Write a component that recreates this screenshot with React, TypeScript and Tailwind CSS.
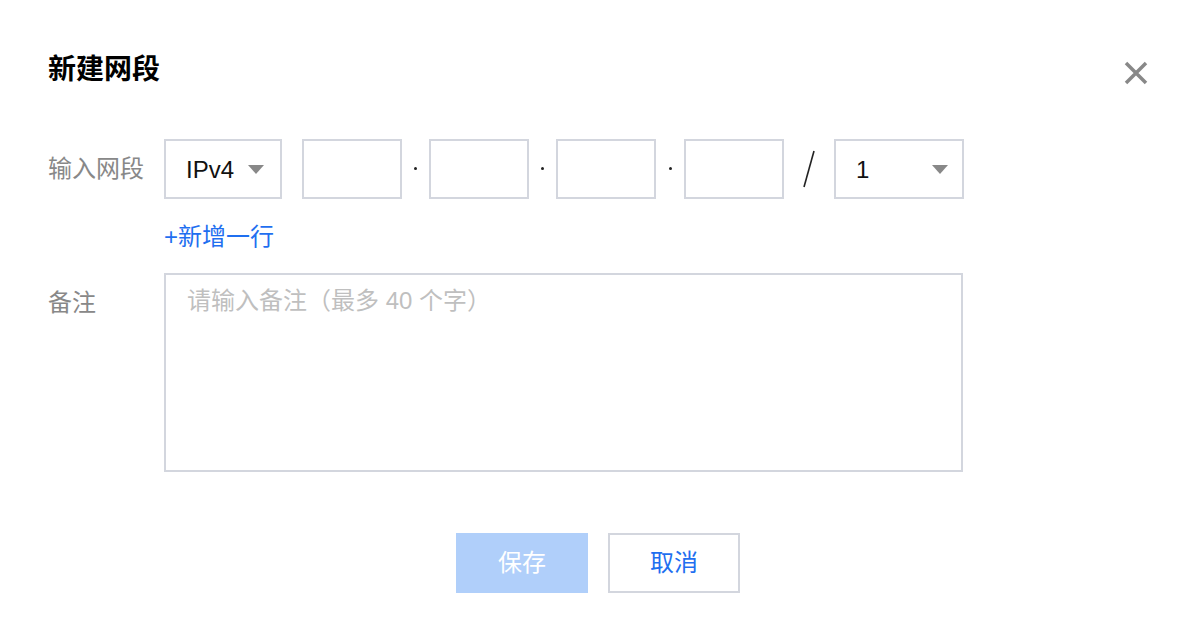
import React from "react";

const FONT = "font-['Liberation_Sans','Noto_Sans_CJK_SC',sans-serif]";

function Caret() {
  return (
    <svg width="16" height="9" viewBox="0 0 16 9" className="shrink-0">
      <path d="M0 0 L16 0 L8 9 Z" fill="#888888" />
    </svg>
  );
}

function Dot() {
  return (
    <div className="w-[27px] h-[60px] flex items-center justify-center">
      <div className="w-[3px] h-[3px] rounded-full bg-[#222] mt-[-2px]" />
    </div>
  );
}

function Box() {
  return <input className={`w-[100px] h-[60px] border-2 border-[#d3d6de] outline-none px-3 text-[24px] ${FONT}`} />;
}

export default function App() {
  return (
    <div className={`w-[1196px] h-[640px] bg-white ${FONT} text-[#000]`}>
      <div className="flex items-start justify-between pl-[48px] pr-[48px] pt-[50px]">
        <div className="text-[28px] leading-[40px] font-bold">新建网段</div>
        <svg width="24" height="24" viewBox="0 0 24 24" className="mt-[11px]">
          <path d="M2 2 L22 22 M22 2 L2 22" stroke="#888888" strokeWidth="3.5" />
        </svg>
      </div>

      <div className="flex items-center pl-[48px] mt-[49px]">
        <div className="w-[116px] text-[24px] leading-[36px] text-[#888]">输入网段</div>
        <div className="w-[118px] h-[60px] border-2 border-[#d3d6de] flex items-center justify-between pl-[20px] pr-[16px]">
          <span className="text-[24px] text-[#111] mt-[2px]">IPv4</span>
          <Caret />
        </div>
        <div className="w-[20px]" />
        <Box />
        <Dot />
        <Box />
        <Dot />
        <Box />
        <div className="w-[28px] h-[60px] flex items-center justify-center">
          <div className="w-[3px] h-[3px] rounded-full bg-[#222] mt-[-2px]" />
        </div>
        <Box />
        <div className="w-[50px] h-[60px] flex items-center justify-center">
          <svg width="14" height="40" viewBox="0 0 14 40">
            <path d="M12 2 L2 38" stroke="#222" strokeWidth="1.6" />
          </svg>
        </div>
        <div className="w-[130px] h-[60px] border-2 border-[#d3d6de] flex items-center justify-between pl-[20px] pr-[14px]">
          <span className="text-[24px] text-[#111] mt-[2px]">1</span>
          <Caret />
        </div>
      </div>

      <div className="pl-[164px] mt-[20px]">
        <span className="text-[24px] leading-[36px] text-[#1f6ff0]">+新增一行</span>
      </div>

      <div className="flex items-start pl-[48px] mt-[18px]">
        <div className="w-[116px] text-[24px] leading-[36px] text-[#888] mt-[12px]">备注</div>
        <textarea
          placeholder="请输入备注（最多 40 个字）"
          className={`w-[799px] h-[199px] border-2 border-[#d3d6de] outline-none resize-none pl-[21px] pt-[8px] text-[24px] leading-[36px] placeholder:text-[#bfbfbf] ${FONT}`}
        />
      </div>

      <div className="flex justify-center gap-[20px] mt-[61px]">
        <button className="w-[132px] h-[60px] bg-[#b0cffa] text-white text-[24px]">保存</button>
        <button className="w-[132px] h-[60px] border-2 border-[#d3d6de] text-[#1f6ff0] text-[24px] bg-white">取消</button>
      </div>
    </div>
  );
}
